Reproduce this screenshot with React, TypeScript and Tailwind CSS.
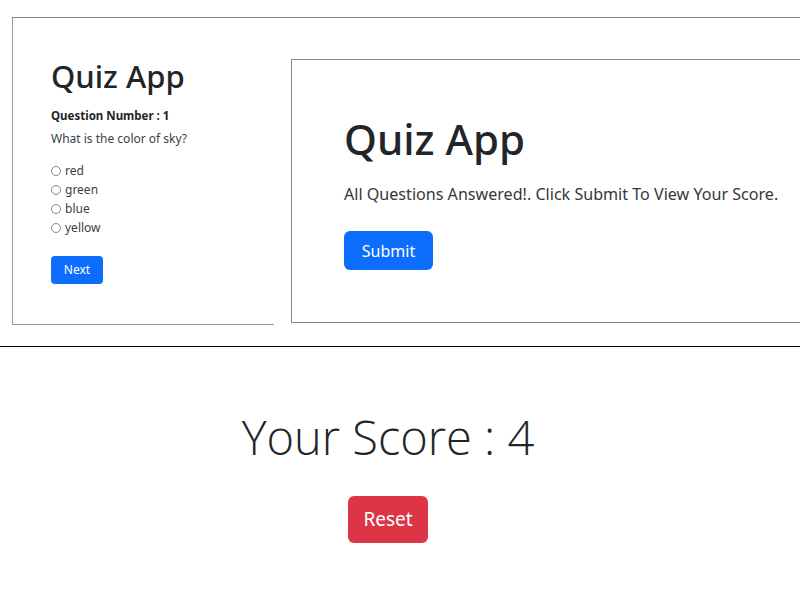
const options = ['red', 'green', 'blue', 'yellow'];

const font = { fontFamily: '"Noto Sans", "Open Sans", sans-serif' };

const QuestionCard = () => (
    <div className="w-[262px] h-[307px] shrink-0 border-l border-b border-[#9a9a9a] pl-[38px] pt-[38px] text-[#212529]">
        <h1 className="text-[31px] font-medium leading-[40px]">Quiz App</h1>
        <div className="mt-[12px] text-[11.5px] font-bold leading-[16px]">Question Number : 1</div>
        <div className="mt-[6px] text-[12px] leading-[18px] text-[#3a3f44]">What is the color of sky?</div>
        <div className="mt-[13px] flex flex-col">
            {options.map((o) => (
                <label key={o} className="flex items-center h-[19px] text-[12px] text-[#3a3f44]">
                    <span className="w-[10px] h-[10px] rounded-full border border-[#888] mr-[4px]" />
                    {o}
                </label>
            ))}
        </div>
        <button className="mt-[19px] w-[52px] h-[28px] rounded-[4px] bg-[#0d6efd] text-white text-[12px]">Next</button>
    </div>
);

const SubmitCard = () => (
    <div className="flex-1 h-[264px] mt-[41px] ml-[17px] border-l border-t border-b border-[#8a8a8a] pl-[52px] pt-[53px] text-[#212529]">
        <h1 className="text-[42px] font-medium leading-[52px]">Quiz App</h1>
        <p className="mt-[17px] text-[16.1px] leading-[24px] text-[#33383d]">
            All Questions Answered!. Click Submit To View Your Score.
        </p>
        <button className="mt-[25px] w-[89px] h-[39px] rounded-[6px] bg-[#0d6efd] text-white text-[16px]">Submit</button>
    </div>
);

export default function App() {
    return (
        <div className="w-[800px] h-[600px] bg-white overflow-hidden" style={font}>
            <div className="pt-[17px]">
                <div className="ml-[12px] border-t border-[#8a8a8a] flex">
                    <QuestionCard />
                    <SubmitCard />
                </div>
            </div>
            <hr className="mt-[21px] border-t border-black" />
            <div className="w-[776px] flex flex-col items-center pt-[55px]">
                <h2 className="text-[47px] font-light leading-[70px] text-[#212529]" style={{ fontFamily: '"Open Sans", "Noto Sans", sans-serif' }}>
                    Your Score : 4
                </h2>
                <button className="mt-[24px] w-[80px] h-[47px] rounded-[6px] bg-[#dc3545] text-white text-[19px]">Reset</button>
            </div>
        </div>
    );
}
